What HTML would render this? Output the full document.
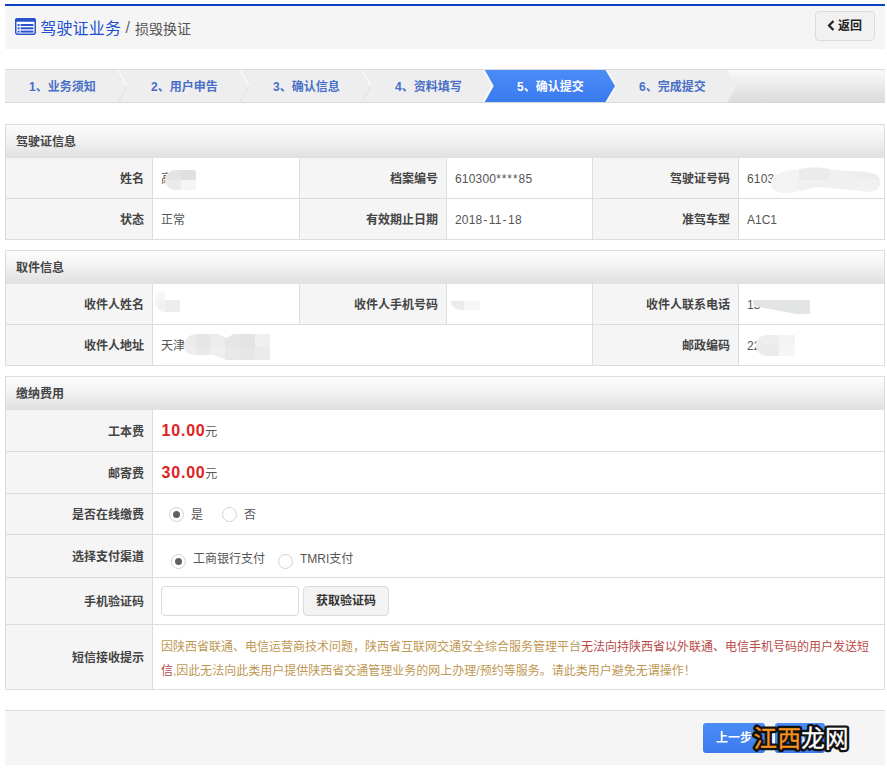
<!DOCTYPE html>
<html lang="zh-CN">
<head>
<meta charset="utf-8">
<title>驾驶证业务 / 损毁换证</title>
<style>
*{box-sizing:border-box;margin:0;padding:0}
html,body{width:887px;height:769px;background:#fff;overflow:hidden}
body{font-family:"Liberation Sans","Noto Sans CJK SC",sans-serif;font-size:12px;color:#333;position:relative}
div,span{position:absolute;white-space:nowrap}
.hdr{left:5px;top:4px;width:880px;height:45px;background:#f5f5f5;border-top:2px solid #0b3fc4}
.t1{left:40.300px;top:16.500px;letter-spacing:.15px;font-size:16px;color:#2150d2;line-height:24px}
.t2{top:17px;font-size:14px;color:#555;line-height:24px}
.back{left:815px;top:11px;width:60px;height:30px;border:1px solid #dcdcdc;border-radius:4px;background:#f1f1f1}
.back span{left:22px;top:0;font-weight:bold;font-size:12px;line-height:28px;color:#222}
.steps{left:5px;top:69px;width:880px;height:34px}
.step{top:70px;height:32px;line-height:35px;font-weight:bold;font-size:12px;color:#486ec8}
.step.on{color:#fff}
.panel{left:5px;width:880px;border:1px solid #ddd;background:#fff}
.ph{left:6px;width:878px;height:33px;background:linear-gradient(#fcfcfc,#f2f2f2 45%,#e0e0e0)}
.pt{left:16px;height:33px;line-height:35px;font-weight:bold;font-size:12px;color:#444}
.lb{background:#f5f5f5}
.hl{height:1px;background:#ddd}
.vl{width:1px;background:#ddd}
.l{font-weight:bold;color:#444;text-align:right;font-size:12px}
.v{color:#555;font-size:12px}
.v u{text-decoration:none;letter-spacing:.18px}
.v s{text-decoration:none;letter-spacing:.93px}
.v em{font-style:normal;letter-spacing:1.6px;margin-left:.8px}
.foot{left:5px;top:710px;width:880px;height:55px;background:#f5f5f5;border-top:1px solid #ddd}
.btn{top:723px;height:30px;border-radius:3px;background:linear-gradient(#4a8bf6,#3b7bee);color:#fff;font-weight:bold;font-size:12px;line-height:30px;text-align:center}
.price{color:#e02222;font-weight:bold;font-size:16px;letter-spacing:.8px;margin-left:.5px;margin-right:-.3px}
.radio{width:15px;height:15px;border-radius:50%;border:1px solid #d2d2d2;background:#fff}
.radio.on::after{content:"";position:absolute;left:3px;top:3px;width:7px;height:7px;border-radius:50%;background:#606060}
.inp{left:161px;top:586px;width:138px;height:30px;border:1px solid #dadada;border-radius:4px;background:#fff}
.gbtn{left:303px;top:586px;width:86px;height:30px;border:1px solid #dcdcdc;border-radius:4px;background:#f3f3f3;font-weight:bold;font-size:12px;line-height:28px;text-align:center;color:#333}
.warn{left:161px;font-size:12px;line-height:24px;color:#c09853}
.warn b{font-weight:normal;color:#b94a48}
</style>
</head>
<body>
<div class="hdr"></div>
<svg style="position:absolute;left:15px;top:18px" width="21" height="17" viewBox="0 0 21 17"><rect x="0.75" y="0.75" width="19.5" height="15.5" rx="2" fill="#fff" stroke="#2a52cc" stroke-width="1.5"/><path d="M0 2.5a2.5 2.5 0 0 1 2.500-2.500h16a2.500 2.500 0 0 1 2.500 2.500v1.200h-21z" fill="#2a52cc"/><g fill="#2a52cc"><rect x="2.600" y="6" width="2" height="2"/><rect x="2.600" y="9.300" width="2" height="2"/><rect x="2.600" y="12.600" width="2" height="2"/><rect x="5.600" y="6" width="12.800" height="2"/><rect x="5.600" y="9.300" width="12.800" height="2"/><rect x="5.600" y="12.600" width="12.800" height="2"/></g></svg>
<span class="t1">驾驶证业务</span><span class="t2" style="left:125.500px;font-size:16px;top:16px;color:#666">/</span><span class="t2" style="left:135px">损毁换证</span>
<div class="back"><svg style="position:absolute;left:11px;top:8px" width="8" height="11" viewBox="0 0 8 11"><path d="M6.500 1L2 5.500L6.500 10" fill="none" stroke="#222" stroke-width="2.200"/></svg><span>返回</span></div>
<svg class="steps" style="position:absolute;left:5px;top:69px" width="880" height="34" viewBox="0 0 880 34"><defs><linearGradient id="g1" x1="0" y1="0" x2="0" y2="1"><stop offset="0" stop-color="#fafafa"/><stop offset="1" stop-color="#dadada"/></linearGradient><linearGradient id="g2" x1="0" y1="0" x2="0" y2="1"><stop offset="0" stop-color="#4b8cf7"/><stop offset="1" stop-color="#3a7aee"/></linearGradient></defs><rect x="0" y="0" width="880" height="34" fill="url(#g1)"/><path d="M0 1H722.500L731.500 17L722.500 33H0z" fill="#eeeeee"/><path d="M113 1L122 17" stroke="#fff" stroke-width="1.100" fill="none" opacity="0.850"/><path d="M122 17L113 33" stroke="#e2e2e2" stroke-width="1.100" fill="none" opacity="0.900"/><path d="M235 1L244 17" stroke="#fff" stroke-width="1.100" fill="none" opacity="0.850"/><path d="M244 17L235 33" stroke="#e2e2e2" stroke-width="1.100" fill="none" opacity="0.900"/><path d="M357 1L366 17" stroke="#fff" stroke-width="1.100" fill="none" opacity="0.850"/><path d="M366 17L357 33" stroke="#e2e2e2" stroke-width="1.100" fill="none" opacity="0.900"/><path d="M478.200 1L487.200 17L478.200 33" stroke="#fff" stroke-width="1.200" fill="none" opacity="0.900"/><path d="M479.800 1H600.400L610 17L600.400 33H479.800L488.800 17z" fill="url(#g2)"/><path d="M601.800 1L611.200 17L601.800 33" stroke="#fff" stroke-width="1.100" fill="none" opacity="0.800"/><rect x="0" y="0" width="880" height="1" fill="#dadada"/><rect x="0" y="33" width="880" height="1" fill="#d8d8d8"/></svg>
<div class="step" style="left:29px">1、业务须知</div>
<div class="step" style="left:151px">2、用户申告</div>
<div class="step" style="left:273px">3、确认信息</div>
<div class="step" style="left:395px">4、资料填写</div>
<div class="step on" style="left:517px">5、确认提交</div>
<div class="step" style="left:639px">6、完成提交</div>
<div class="panel" style="top:124px;height:116px"></div>
<div class="ph" style="top:125px"></div>
<div class="pt" style="top:125px">驾驶证信息</div>
<div class="lb" style="left:6px;top:158px;width:146px;height:40px"></div>
<div class="l" style="left:6px;top:158px;width:138px;height:40px;line-height:43px">姓名</div>
<div class="vl" style="left:152px;top:158px;height:40px"></div>
<div class="v" style="left:161px;top:158px;height:40px;line-height:42px">高</div>
<div class="vl" style="left:299px;top:158px;height:40px"></div>
<div class="lb" style="left:300px;top:158px;width:146px;height:40px"></div>
<div class="l" style="left:300px;top:158px;width:138px;height:40px;line-height:43px">档案编号</div>
<div class="vl" style="left:446px;top:158px;height:40px"></div>
<div class="v" style="left:455px;top:158px;height:40px;line-height:42px"><u>610300</u><s>****</s><u>85</u></div>
<div class="vl" style="left:592px;top:158px;height:40px"></div>
<div class="lb" style="left:593px;top:158px;width:145px;height:40px"></div>
<div class="l" style="left:593px;top:158px;width:137px;height:40px;line-height:43px">驾驶证号码</div>
<div class="vl" style="left:738px;top:158px;height:40px"></div>
<div class="v" style="left:747px;top:158px;height:40px;line-height:42px"><u>6103</u></div>
<div class="hl" style="left:6px;top:198px;width:878px"></div>
<div class="lb" style="left:6px;top:199px;width:146px;height:40px"></div>
<div class="l" style="left:6px;top:199px;width:138px;height:40px;line-height:43px">状态</div>
<div class="vl" style="left:152px;top:199px;height:40px"></div>
<div class="v" style="left:161px;top:199px;height:40px;line-height:42px">正常</div>
<div class="vl" style="left:299px;top:199px;height:40px"></div>
<div class="lb" style="left:300px;top:199px;width:146px;height:40px"></div>
<div class="l" style="left:300px;top:199px;width:138px;height:40px;line-height:43px">有效期止日期</div>
<div class="vl" style="left:446px;top:199px;height:40px"></div>
<div class="v" style="left:455px;top:199px;height:40px;line-height:42px"><u>2018</u><em>-</em><u>11</u><em>-</em><u>18</u></div>
<div class="vl" style="left:592px;top:199px;height:40px"></div>
<div class="lb" style="left:593px;top:199px;width:145px;height:40px"></div>
<div class="l" style="left:593px;top:199px;width:137px;height:40px;line-height:43px">准驾车型</div>
<div class="vl" style="left:738px;top:199px;height:40px"></div>
<div class="v" style="left:747px;top:199px;height:40px;line-height:42px">A1C1</div>
<div class="mk" style="left:165px;top:170px;width:31px;height:20px;overflow:hidden;border-radius:10px 3px 2px 10px;background:#fff"><div style="left:0.0px;top:0.0px;width:16.0px;height:10.5px;background:#e4e4e4"></div><div style="left:15.5px;top:0.0px;width:16.0px;height:10.5px;background:#e0e0e0"></div><div style="left:0.0px;top:10.0px;width:16.0px;height:10.5px;background:#ebebeb"></div><div style="left:15.5px;top:10.0px;width:16.0px;height:10.5px;background:#f5f5f5"></div></div>
<div class="panel" style="top:250px;height:116px"></div>
<div class="ph" style="top:251px"></div>
<div class="pt" style="top:251px">取件信息</div>
<div class="lb" style="left:6px;top:284px;width:146px;height:40px"></div>
<div class="l" style="left:6px;top:284px;width:138px;height:40px;line-height:43px">收件人姓名</div>
<div class="vl" style="left:152px;top:284px;height:40px"></div>
<div class="v" style="left:161px;top:284px;height:40px;line-height:42px"></div>
<div class="vl" style="left:299px;top:284px;height:40px"></div>
<div class="lb" style="left:300px;top:284px;width:146px;height:40px"></div>
<div class="l" style="left:300px;top:284px;width:138px;height:40px;line-height:43px">收件人手机号码</div>
<div class="vl" style="left:446px;top:284px;height:40px"></div>
<div class="v" style="left:455px;top:284px;height:40px;line-height:42px"></div>
<div class="vl" style="left:592px;top:284px;height:40px"></div>
<div class="lb" style="left:593px;top:284px;width:145px;height:40px"></div>
<div class="l" style="left:593px;top:284px;width:137px;height:40px;line-height:43px">收件人联系电话</div>
<div class="vl" style="left:738px;top:284px;height:40px"></div>
<div class="v" style="left:747px;top:284px;height:40px;line-height:42px">13</div>
<div class="hl" style="left:6px;top:324px;width:878px"></div>
<div class="lb" style="left:6px;top:325px;width:146px;height:40px"></div>
<div class="l" style="left:6px;top:325px;width:138px;height:40px;line-height:43px">收件人地址</div>
<div class="vl" style="left:152px;top:325px;height:40px"></div>
<div class="v" style="left:161px;top:325px;height:40px;line-height:42px">天津</div>
<div class="vl" style="left:592px;top:325px;height:40px"></div>
<div class="lb" style="left:593px;top:325px;width:145px;height:40px"></div>
<div class="l" style="left:593px;top:325px;width:137px;height:40px;line-height:43px">邮政编码</div>
<div class="vl" style="left:738px;top:325px;height:40px"></div>
<div class="v" style="left:747px;top:325px;height:40px;line-height:42px">22</div>
<div class="panel" style="top:376px;height:314px"></div>
<div class="ph" style="top:377px"></div>
<div class="pt" style="top:377px">缴纳费用</div>
<div class="lb" style="left:6px;top:410px;width:146px;height:41px"></div>
<div class="l" style="left:6px;top:410px;width:138px;height:41px;line-height:44px">工本费</div>
<div class="vl" style="left:152px;top:410px;height:41px"></div>
<div class="v" style="left:161px;top:410px;height:41px;line-height:43px"><span class="price" style="position:relative;top:-1px">10.00</span><span style="position:relative;top:-1px">元</span></div>
<div class="hl" style="left:6px;top:451px;width:878px"></div>
<div class="lb" style="left:6px;top:452px;width:146px;height:41px"></div>
<div class="l" style="left:6px;top:452px;width:138px;height:41px;line-height:44px">邮寄费</div>
<div class="vl" style="left:152px;top:452px;height:41px"></div>
<div class="v" style="left:161px;top:452px;height:41px;line-height:43px"><span class="price" style="position:relative;top:-1px">30.00</span><span style="position:relative;top:-1px">元</span></div>
<div class="hl" style="left:6px;top:493px;width:878px"></div>
<div class="lb" style="left:6px;top:494px;width:146px;height:40px"></div>
<div class="l" style="left:6px;top:494px;width:138px;height:40px;line-height:43px">是否在线缴费</div>
<div class="vl" style="left:152px;top:494px;height:40px"></div>
<div class="v" style="left:161px;top:494px;height:40px;line-height:42px"></div>
<div class="hl" style="left:6px;top:534px;width:878px"></div>
<div class="lb" style="left:6px;top:535px;width:146px;height:42px"></div>
<div class="l" style="left:6px;top:535px;width:138px;height:42px;line-height:45px">选择支付渠道</div>
<div class="vl" style="left:152px;top:535px;height:42px"></div>
<div class="v" style="left:161px;top:535px;height:42px;line-height:44px"></div>
<div class="hl" style="left:6px;top:577px;width:878px"></div>
<div class="lb" style="left:6px;top:578px;width:146px;height:46px"></div>
<div class="l" style="left:6px;top:578px;width:138px;height:46px;line-height:49px">手机验证码</div>
<div class="vl" style="left:152px;top:578px;height:46px"></div>
<div class="v" style="left:161px;top:578px;height:46px;line-height:48px"></div>
<div class="hl" style="left:6px;top:624px;width:878px"></div>
<div class="lb" style="left:6px;top:625px;width:146px;height:64px"></div>
<div class="l" style="left:6px;top:625px;width:138px;height:64px;line-height:67px">短信接收提示</div>
<div class="vl" style="left:152px;top:625px;height:64px"></div>
<div class="v" style="left:161px;top:625px;height:64px;line-height:66px"></div>
<div class="radio on" style="left:169px;top:507px"></div><div class="v" style="left:191px;top:495px;line-height:40px">是</div>
<div class="radio" style="left:222px;top:507px"></div><div class="v" style="left:244px;top:495px;line-height:40px">否</div>
<div class="radio on" style="left:171px;top:554px"></div><div class="v" style="left:193px;top:539px;line-height:41px">工商银行支付</div>
<div class="radio" style="left:278px;top:554px"></div><div class="v" style="left:300px;top:539px;line-height:41px">TMRI支付</div>
<div class="inp"></div><div class="gbtn">获取验证码</div>
<div class="warn" style="top:635px">因陕西省联通、电信运营商技术问题，陕西省互联网交通安全综合服务管理平台<b>无法向持陕西省以外联通、电信手机号码的用户发送短</b></div>
<div class="warn" style="top:659px"><b>信</b>,因此无法向此类用户提供陕西省交通管理业务的网上办理/预约等服务。请此类用户避免无谓操作！</div>
<svg style="position:absolute;left:769px;top:166px" width="113" height="29" viewBox="0 0 113 29"><clipPath id="m1"><path d="M2 16C2 8 14 5 30 3C42 1 52 1 60 3C76 6 96 4 106 8C112 11 113 20 108 24C100 28 88 24 72 23C60 22 54 20 44 22C30 25 14 30 6 25C2 23 2 20 2 16z"/></clipPath><g clip-path="url(#m1)"><rect width="113" height="29" fill="#fff"/><rect x="0" y="0" width="30" height="29" fill="#f3f3f3"/><rect x="30" y="0" width="30" height="14" fill="#ebebeb"/><rect x="30" y="14" width="30" height="15" fill="#f0f0f0"/><rect x="60" y="0" width="25" height="29" fill="#f0f0f0"/><rect x="85" y="0" width="28" height="14" fill="#ededed"/><rect x="85" y="14" width="28" height="15" fill="#f1f1f1"/></g></svg>
<svg style="position:absolute;left:154px;top:290px" width="27" height="23" viewBox="0 0 27 23"><clipPath id="m2"><path d="M1 11C1 4 5 1 11 1V10H26V22H12C5 22 1 18 1 11z"/></clipPath><g clip-path="url(#m2)"><rect width="27" height="23" fill="#fff"/><rect x="0" y="0" width="11" height="11" fill="#f6f6f6"/><rect x="0" y="11" width="11" height="12" fill="#f2f2f2"/><rect x="11" y="0" width="16" height="23" fill="#ededed"/></g></svg>
<svg style="position:absolute;left:450px;top:298px" width="31" height="14" viewBox="0 0 31 14"><clipPath id="m3"><path d="M1 2H14V2H30V12H12C5 12 1 8 1 2z"/></clipPath><g clip-path="url(#m3)"><rect width="31" height="14" fill="#fff"/><rect x="0" y="0" width="31" height="3" fill="#fdfdfd"/><rect x="0" y="3" width="14" height="11" fill="#ebebeb"/><rect x="14" y="3" width="17" height="11" fill="#f6f6f6"/></g></svg>
<svg style="position:absolute;left:183px;top:333px" width="88" height="28" viewBox="0 0 88 28"><clipPath id="m4"><path d="M1 14C1 6 6 1 14 1H35L43 5L51 1H87V27H44L30 22H14C6 22 1 20 1 14z"/></clipPath><g clip-path="url(#m4)"><rect width="88" height="28" fill="#fff"/><rect x="0" y="0" width="13" height="14" fill="#e9ebed"/><rect x="0" y="14" width="13" height="14" fill="#eceef0"/><rect x="13" y="0" width="14" height="14" fill="#e6e6e6"/><rect x="13" y="14" width="14" height="14" fill="#e9e9e9"/><rect x="27" y="0" width="15" height="14" fill="#ececec"/><rect x="27" y="14" width="15" height="14" fill="#efefef"/><rect x="42" y="0" width="15" height="14" fill="#e6e6e6"/><rect x="42" y="14" width="15" height="14" fill="#e8e8e8"/><rect x="57" y="0" width="15" height="14" fill="#e3e3e3"/><rect x="57" y="14" width="15" height="14" fill="#e6e6e6"/><rect x="72" y="0" width="16" height="14" fill="#f0f0f0"/><rect x="72" y="14" width="16" height="14" fill="#ebebeb"/></g></svg>
<svg style="position:absolute;left:752px;top:299px" width="59" height="16" viewBox="0 0 59 16"><clipPath id="m5"><path d="M1 3C1 1 2 1 4 1H58V15H44L8 8C3 7 1 6 1 3z"/></clipPath><g clip-path="url(#m5)"><rect width="59" height="16" fill="#fff"/><rect x="0" y="0" width="12" height="16" fill="#e4e2de"/><rect x="12" y="0" width="16" height="16" fill="#e3e4e5"/><rect x="28" y="0" width="31" height="16" fill="#e3e4e4"/></g></svg>
<svg style="position:absolute;left:755px;top:334px" width="41" height="23" viewBox="0 0 41 23"><clipPath id="m6"><path d="M1 11C1 5 6 1 14 1H40V22H14C6 22 1 18 1 11z"/></clipPath><g clip-path="url(#m6)"><rect width="41" height="23" fill="#fff"/><rect x="0" y="0" width="24" height="11" fill="#eeeeec"/><rect x="0" y="11" width="24" height="12" fill="#ebebea"/><rect x="24" y="0" width="17" height="11" fill="#f3f4f3"/><rect x="24" y="11" width="17" height="12" fill="#f5f6f5"/></g></svg>
<div class="foot"></div>
<div class="btn" style="left:703px;width:62px">上一步</div>
<div class="btn" style="left:775px;width:50px">确认</div>
<svg style="position:absolute;left:745px;top:716px" width="112" height="44" viewBox="0 0 112 44" font-family="Liberation Sans, Noto Sans CJK SC, sans-serif" font-size="23.500"><text x="8.600" y="31.300" letter-spacing="0.300" stroke="#111" stroke-width="5.200" stroke-linejoin="round" fill="#111">江西龙网</text><text x="8.600" y="31.300" letter-spacing="0.300" fill="#fff" stroke="#fff" stroke-width="0.300"><tspan fill="#f7931e" stroke="#f7931e">江西</tspan>龙网</text></svg>
</body>
</html>
